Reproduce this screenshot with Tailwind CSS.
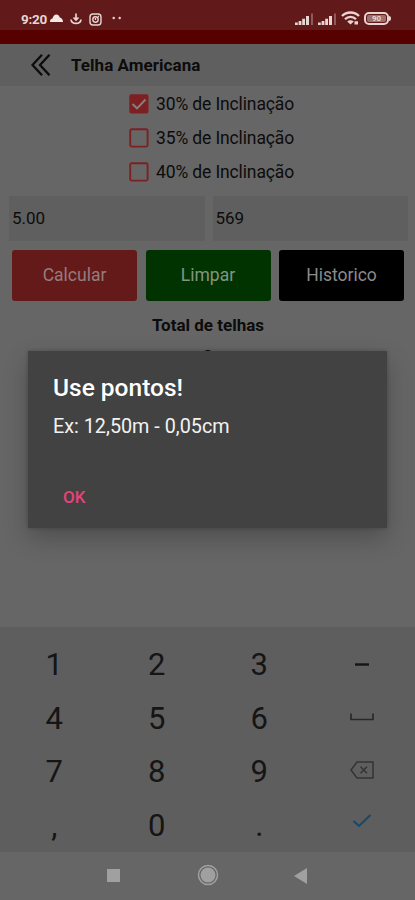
<!DOCTYPE html>
<html lang="pt-BR">
<head>
    <meta charset="UTF-8">
    <meta name="viewport" content="width=device-width, initial-scale=1.0">
    <title>Telha Americana</title>
    <script src="https://cdn.jsdelivr.net/npm/@tailwindcss/browser@4"></script>
</head>
<body class="bg-[#666666] font-[Roboto,sans-serif] text-[#0c0c0c]">

    <div class="relative w-[415px] h-[900px] overflow-hidden flex flex-col">

        <!-- Status bar -->
        <div class="h-[30px] shrink-0 bg-[#621919] flex items-start justify-between pl-[21px] pr-[24px] pt-[11px] text-[#e6d5d1]">
            <div class="flex items-center h-4">
                <span class="w-[27px] text-[13.500px] leading-4 font-bold tracking-[-0.3px]">9:20</span>
                <svg class="ml-[2px] -mt-[2px]" width="13" height="8" viewBox="0 0 13 8"><path fill="#f4e8e4" d="M0 8C0 5.500 1.300 4.800 2.500 4.600C3.200 2 4.600.5 6.300.5C8 .5 9.200 1.800 9.800 3.600C11.600 4 13 5.400 13 8Z"/></svg>
                <svg class="ml-[7px]" width="12" height="12" viewBox="0 0 12 12" fill="none" stroke="currentColor" stroke-width="1.700"><path d="M6 .5V6.500M3.500 4.500L6 7L8.500 4.500M1 6.500C1.500 11.700 10.500 11.700 11 6.500"/></svg>
                <svg class="ml-[7px]" width="13" height="13" viewBox="0 0 13 13" fill="none" stroke="currentColor" stroke-width="1.400"><rect x="1" y="1" width="11" height="11" rx="3"/><circle cx="6.500" cy="6.500" r="2.700"/><path d="M9 3.500h1M6.500 5v2"/></svg>
                <svg class="ml-[10px] -mt-[2px]" width="10" height="4" viewBox="0 0 10 4" fill="currentColor"><circle cx="1.700" cy="2" r="1.200"/><circle cx="7.700" cy="2" r="1.200"/></svg>
            </div>
            <div class="flex items-center h-4">
                <svg width="19" height="12" viewBox="0 0 19 12" fill="currentColor"><path d="M0 9.500h2.800V12H0zM3.600 8h2.800v4H3.600zM7.200 5.800H10V12H7.200zM11 3H14v9H11z"/><path opacity=".35" d="M16 .5h2V12h-2z"/></svg>
                <svg class="ml-1" width="19" height="12" viewBox="0 0 19 12" fill="currentColor"><path d="M0 9.500h2.800V12H0zM3.600 8h2.800v4H3.600zM7.200 5.800H10V12H7.200zM11 3H14v9H11z"/><path opacity=".35" d="M16 .5h2V12h-2z"/></svg>
                <svg class="ml-[4px] -mt-[2px]" width="19" height="14" viewBox="0 0 19 14" fill="none" stroke="currentColor" stroke-width="2.300"><path d="M1 5C5.500 .3 13.500 .3 18 5M4 8.200C7 5 12 5 15 8.200"/><path fill="currentColor" stroke="none" d="M9.500 13.500L6.200 10.400C8 8.800 11 8.800 12.800 10.400ZM13.500 10.200h3.500v3.200h-3.500z"/></svg>
                <div class="ml-[4px] -mt-px w-[25px] h-[13px] border-2 border-current rounded-[5px] flex items-center justify-center p-px">
                    <span class="w-full h-full bg-[#9c716d] rounded-[2px] text-center text-[8px] leading-[7px] font-bold">90</span>
                </div>
                <div class="-mt-px w-[2px] h-[5px] bg-current rounded-r"></div>
            </div>
        </div>
        <div class="h-[14px] shrink-0 bg-[#570000]"></div>

        <!-- App header -->
        <div class="h-[42px] shrink-0 bg-[#5f5f5f] flex items-center pl-[31px]">
            <svg width="20" height="22" viewBox="0 0 20 22" fill="none" stroke="#0c0c0c" stroke-width="2.300"><path d="M11 .8L1.500 11L11 21.200M18.500 .8L9 11L18.500 21.200"/></svg>
            <h1 class="ml-5 mt-[2px] text-[17px] font-bold tracking-[0.05px] whitespace-nowrap">Telha Americana</h1>
        </div>

        <!-- Slope options -->
        <div class="pt-px pl-[129px] flex flex-col text-[17.500px] tracking-[-0.13px]">
            <label class="h-[34px] flex items-center">
                <svg width="20" height="20" viewBox="0 0 20 20"><rect x=".3" y=".3" width="19.200" height="19.200" rx="2" fill="#7c2022"/><path d="M3.500 10L8 14.300L16.500 5.500" fill="none" stroke="#858181" stroke-width="1.900"/></svg>
                <span class="ml-[7px] whitespace-nowrap">30% de Inclinação</span>
            </label>
            <label class="h-[34px] flex items-center">
                <svg width="20" height="20" viewBox="0 0 20 20"><rect x="1.200" y="1.200" width="17.400" height="17.400" rx="1.500" fill="none" stroke="#7c2022" stroke-width="1.900"/></svg>
                <span class="ml-[7px] whitespace-nowrap">35% de Inclinação</span>
            </label>
            <label class="h-[34px] flex items-center">
                <svg width="20" height="20" viewBox="0 0 20 20"><rect x="1.200" y="1.200" width="17.400" height="17.400" rx="1.500" fill="none" stroke="#7c2022" stroke-width="1.900"/></svg>
                <span class="ml-[7px] whitespace-nowrap">40% de Inclinação</span>
            </label>
        </div>

        <!-- Measures -->
        <div class="mt-[7px] pl-[9px] pr-[7px] grid grid-cols-2 gap-2 text-[17px]">
            <div class="h-[45px] bg-[#5f5f5f] pl-[3px] flex items-center">5.00</div>
            <div class="h-[45px] bg-[#5f5f5f] pl-[3px] flex items-center">569</div>
        </div>

        <!-- Actions -->
        <div class="mt-[9px] pl-3 pr-[11px] grid grid-cols-3 gap-[8.500px] text-[17.500px] text-[#8b8b8b]">
            <button class="h-[51px] rounded-[3px] bg-[#651a1a] text-[#977c7c]">Calcular</button>
            <button class="h-[51px] rounded-[3px] bg-[#003300] text-[#829582]">Limpar</button>
            <button class="h-[51px] rounded-[3px] bg-black">Historico</button>
        </div>

        <!-- Result, mostly behind the dialog -->
        <div class="flex-1 pt-[13px] text-center">
            <p class="pl-px text-[17px] leading-[22px] font-bold">Total de telhas</p>
            <p class="mt-[9px] text-[22px] leading-7 font-bold">0</p>
        </div>

        <!-- Numeric keyboard -->
        <div class="h-[225px] shrink-0 bg-[#5e5e5e] pt-[11px] pl-[3px] pr-[2px] grid grid-cols-4 grid-rows-[repeat(4,53.500px)] place-items-center text-[31px] leading-none text-[#151515]">
            <span>1</span>
            <span>2</span>
            <span>3</span>
            <svg width="14" height="3" viewBox="0 0 14 3"><path d="M0 1.500h14" stroke="#151515" stroke-width="2.400"/></svg>
            <span>4</span>
            <span>5</span>
            <span>6</span>
            <svg class="-mt-[3px]" width="24" height="8" viewBox="0 0 24 8" fill="none" stroke="#292929" stroke-width="1.700"><path d="M1 .5V6.500H23V.5"/></svg>
            <span>7</span>
            <span>8</span>
            <span>9</span>
            <svg class="-mt-[4px]" width="24" height="18" viewBox="0 0 24 18" fill="none" stroke="#343434" stroke-width="1.500"><path d="M7 1H23V17H7L1 9ZM10.500 5.800L17 12.200M17 5.800L10.500 12.200"/></svg>
            <span>,</span>
            <span>0</span>
            <span>.</span>
            <svg class="-mt-[8px]" width="20" height="14" viewBox="0 0 20 14" fill="none" stroke="#164867" stroke-width="2"><path d="M1.500 7L7 12L18.500 1"/></svg>
        </div>

        <!-- Navigation bar -->
        <div class="h-12 shrink-0 bg-[#666666] flex items-center pl-[107px] text-[#a0a0a0]">
            <div class="w-[13px] h-[13px] bg-current -mt-[2px]"></div>
            <svg class="ml-[77px] -mt-[2px]" width="22" height="22" viewBox="0 0 22 22"><circle cx="11" cy="11" r="9.500" fill="none" stroke="currentColor" stroke-width="1.500"/><circle cx="11" cy="11" r="7.500" fill="currentColor"/></svg>
            <svg class="ml-[75px] -mt-px" width="13" height="16" viewBox="0 0 13 16" fill="currentColor"><path d="M13 0V16L0 8Z"/></svg>
        </div>

        <!-- Dialog -->
        <div class="absolute left-[28px] top-[351px] w-[359px] h-[177px] bg-[#424242] pl-[25px] pt-[22px] shadow-[0_10px_24px_rgba(0,0,0,0.24),0_0_4px_rgba(0,0,0,0.22)]">
            <h2 class="text-[24.500px] leading-[30px] font-medium text-white">Use pontos!</h2>
            <p class="mt-[12px] text-[19.800px] leading-6 text-[#f2f2f2]">Ex: 12,50m - 0,05cm</p>
            <button class="block mt-[48px] ml-[10px] text-[17px] leading-5 font-medium text-[#e64379]">OK</button>
        </div>

    </div>

</body>
</html>
